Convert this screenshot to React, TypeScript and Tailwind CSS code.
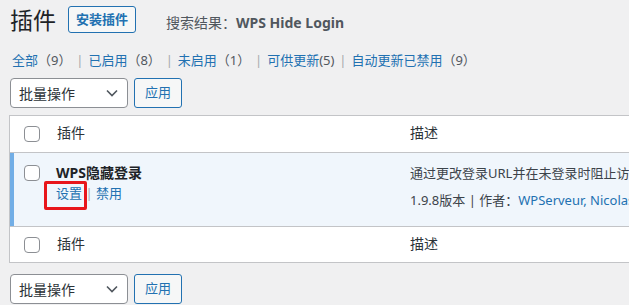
import React from 'react';

const font = "font-['Noto_Sans','Noto_Sans_CJK_SC',sans-serif]";

function Checkbox() {
  return <span className="block w-[16px] h-[16px] rounded-[4px] border border-[#8c8f94] bg-white" />;
}

function BulkActions() {
  return (
    <div className="flex items-center gap-[6px]">
      <div className="w-[118px] h-[30px] rounded-[4px] border border-[#8c8f94] bg-white flex items-center justify-between pl-[8px] pr-[9px] text-[14px] text-[#2c3338]">
        <span>批量操作</span>
        <svg width="12" height="8" viewBox="0 0 12 8" fill="none">
          <path d="M1 1.5l5 5 5-5" stroke="#50575e" strokeWidth="1.6" />
        </svg>
      </div>
      <button className="w-[48px] h-[30px] rounded-[3px] border border-[#2271b1] bg-[#f6f7f7] text-[13px] text-[#2271b1]">
        应用
      </button>
    </div>
  );
}

function HeadRow({ last }: { last?: boolean }) {
  return (
    <div className={`flex items-start ${last ? 'h-[35px]' : 'border-b border-[#c3c4c7] h-[37px]'}`}>
      <div className="w-[39px] pl-[14px] pt-[10px] shrink-0">
        <Checkbox />
      </div>
      <div className="w-[353px] pl-[8px] pt-[7px] text-[14px] leading-[20px] text-[#2c3338] shrink-0">插件</div>
      <div className="pl-[8px] pt-[7px] text-[14px] leading-[20px] text-[#2c3338]">描述</div>
    </div>
  );
}

function Sep() {
  return <span className="px-[1.5px] text-[#a7aaad]"> | </span>;
}

export default function App() {
  return (
    <div className={`w-[629px] h-[305px] overflow-hidden bg-[#f0f0f1] text-[13px] text-[#3c434a] ${font}`}>
      <div className="pl-[10px]">
        {/* Title */}
        <div className="flex items-center pt-[6px] h-[33px] whitespace-nowrap">
          <h1 className="text-[23px] leading-[27px] text-[#1d2327] pt-[2px]">插件</h1>
          <button className="ml-[12px] h-[27px] px-[7px] rounded-[3px] border border-[#2271b1] bg-[#f6f7f7] text-[13px] font-semibold text-[#2271b1]">
            安装插件
          </button>
          <span className="ml-[30px] pt-[5px] text-[14px] text-[#50575e]">
            搜索结果：<b className="text-[#50575e] font-bold">WPS Hide Login</b>
          </span>
        </div>

        {/* Filters */}
        <div className="mt-[17px] h-[20px] leading-[20px] pl-[2px] whitespace-nowrap text-[13px] text-[#50575e]">
          <a className="text-[#2271b1]">全部</a><span>（9）</span>
          <Sep />
          <a className="text-[#2271b1]">已启用</a><span>（8）</span>
          <Sep />
          <a className="text-[#2271b1]">未启用</a><span>（1）</span>
          <Sep />
          <a className="text-[#2271b1]">可供更新</a><span>(5)</span>
          <Sep />
          <a className="text-[#2271b1]">自动更新已禁用</a><span>（9）</span>
        </div>

        <div className="mt-[8px]">
          <BulkActions />
        </div>

        {/* Table */}
        <div className="mt-[7px] -ml-px w-[900px] border border-[#c3c4c7] bg-white whitespace-nowrap">
          <HeadRow />
          <div className="relative flex items-start h-[74px] bg-[#f0f6fc] border-b border-[#c3c4c7]">
            <div className="w-[39px] h-full pl-[10px] pt-[12px] border-l-4 border-[#72aee6] shrink-0">
              <Checkbox />
            </div>
            <div className="relative w-[353px] pl-[7px] pt-[10px] shrink-0">
              <div className="text-[14px] leading-[20px] font-bold text-[#1d2327]">WPS隐藏登录</div>
              <div className="leading-[20px] text-[13px]">
                <a className="text-[#2271b1]">设置</a>
                <span className="text-[#a7aaad]"> | </span>
                <a className="text-[#2271b1]">禁用</a>
              </div>
              <span className="absolute left-[-5px] top-[28px] w-[43px] h-[29px] border-[3px] border-[#e8161b] rounded-[2px]" />
            </div>
            <div className="pl-[8px] pt-[10px] text-[13px]">
              <div className="leading-[20px] text-[#3c434a]">
                通过更改登录URL并在未登录时阻止访问wp-login.php页面和wp-admin目录来保护您的网站。
              </div>
              <div className="mt-[7px] leading-[20px] text-[#3c434a]">
                1.9.8版本 | 作者：<a className="text-[#2271b1]">WPServeur, NicolasKulka, wpformation</a>
              </div>
            </div>
          </div>
          <HeadRow last />
        </div>

        <div className="mt-[11px]">
          <BulkActions />
        </div>
      </div>
    </div>
  );
}
